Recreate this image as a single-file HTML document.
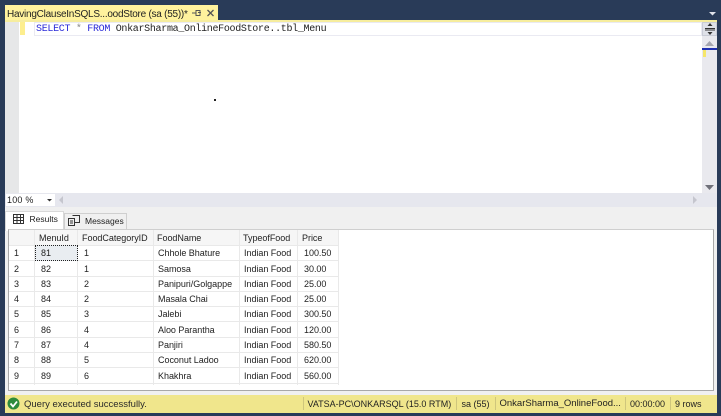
<!DOCTYPE html>
<html><head><meta charset="utf-8"><style>
html,body{margin:0;padding:0}
body{width:721px;height:416px;overflow:hidden;position:relative;background:#293b58;font-family:"Liberation Sans",sans-serif;font-size:9px;color:#222}
div{position:absolute;box-sizing:border-box;white-space:nowrap}
.l{background:#e9e9e9}
.c{line-height:17px;height:15px;font-size:9px;letter-spacing:-.03px}
.s{top:396px;line-height:16px;font-size:9px}
</style></head><body>
<div style="left:5px;top:5px;width:213px;height:16px;background:#fff29d"></div>
<div style="left:7px;top:7px;font-size:10px;letter-spacing:-.25px;line-height:15px;color:#222">HavingClauseInSQLS...oodStore (sa (55))*</div>
<svg style="position:absolute;left:190px;top:8px" width="30" height="11"><path d="M2 5h4M6 2.500v5h4v-5zM8 4.500h3" stroke="#555" fill="none"/><path d="M17.500 2l6 6M23.500 2l-6 6" stroke="#555" stroke-width="1.300"/></svg>
<svg style="position:absolute;left:708px;top:11px" width="10" height="6"><path d="M1 1h7l-3.500 3.500z" fill="#e0e3ea"/></svg>
<div style="left:5px;top:20px;width:712px;height:2px;background:#f6ed9e"></div>
<div style="left:5px;top:22px;width:712px;height:171px;background:#fff"></div>
<div style="left:5px;top:22px;width:14px;height:171px;background:#e6e7e8"></div>
<div style="left:20px;top:22px;width:5px;height:13px;background:#fdee8e"></div>
<div style="left:34px;top:22px;width:668px;height:14px;border:1px solid #eaeaf2"></div>
<div style="left:36px;top:23px;height:14px;font:10px/14px 'Liberation Mono',monospace;letter-spacing:-.31px;color:#222"><span style="color:#2a2ad8">SELECT</span> <span style="color:#888">*</span> <span style="color:#2a2ad8">FROM</span> OnkarSharma_OnlineFoodStore..tbl_Menu</div>
<div style="left:702px;top:22px;width:15px;height:185px;background:#e9e9ee"></div>
<div style="left:702px;top:22px;width:15px;height:14px;background:#dfe1e8;border:1px solid #c9ccd6"></div>
<svg style="position:absolute;left:703px;top:23px" width="14" height="12"><path d="M2 5.500h10M2 7h10" stroke="#333"/><path d="M7 0l-2.500 3h5zM7 12l-2.500-3h5z" fill="#333"/></svg>
<svg style="position:absolute;left:703px;top:40px" width="13" height="7"><path d="M2 6h9L6.500 1z" fill="#a5a6b0"/></svg>
<div style="left:702px;top:48px;width:15px;height:2px;background:#1f2fb0"></div>
<div style="left:703px;top:50px;width:3px;height:7px;background:#f5e66a"></div>
<svg style="position:absolute;left:703px;top:184px" width="13" height="7"><path d="M2 1h9L6.500 6z" fill="#6f7079"/></svg>
<div style="left:5px;top:193px;width:712px;height:14px;background:#e6e7ee"></div>
<div style="left:6px;top:194px;width:49px;height:12px;background:#fff"></div>
<div style="left:7px;top:194px;line-height:12px;font-size:9px;letter-spacing:.2px">100 %</div>
<svg style="position:absolute;left:46px;top:198px" width="8" height="5"><path d="M1 1h5L3.500 3.500z" fill="#333"/></svg>
<svg style="position:absolute;left:58px;top:195px" width="6" height="10"><path d="M5 1v8L1 5z" fill="#c5c6ce"/></svg>
<svg style="position:absolute;left:692px;top:195px" width="6" height="10"><path d="M1 1v8l4-4z" fill="#c5c6ce"/></svg>
<div style="left:5px;top:207px;width:712px;height:188px;background:#f0f0f0"></div>
<div style="left:5px;top:211px;width:59px;height:20px;background:#fff;border:1px solid #d8d8d8;border-bottom:0"></div>
<div style="left:64px;top:213px;width:63px;height:17px;background:#f0f0f0;border:1px solid #cfcfcf;border-bottom:0"></div>
<svg style="position:absolute;left:13px;top:214px" width="11" height="10"><path d="M.5.500h10v9H.5zM.5 3.500h10M.5 6.500h10M4 .5v9M7.500.5v9" fill="#fff" stroke="#333"/></svg>
<div style="left:29.500px;top:211px;line-height:16px;font-size:8.500px">Results</div>
<svg style="position:absolute;left:68px;top:214px" width="12" height="12"><path d="M.5 4.500h6v7h-6zM4.500 1.500h7v7h-5M2 7h3M2 9h3" fill="none" stroke="#333"/></svg>
<div style="left:85px;top:213px;line-height:16px;font-size:8.500px">Messages</div>
<div style="left:8px;top:229px;width:706px;height:162px;background:#fff;border:1px solid #a8a8a8;border-top:1px solid #cfcfcf"></div>
<div style="left:9px;top:230px;width:329px;height:15px;background:#f6f6f6"></div>
<div class="l" style="left:34px;top:230px;width:1px;height:155px"></div>
<div class="l" style="left:77px;top:230px;width:1px;height:155px"></div>
<div class="l" style="left:153px;top:230px;width:1px;height:155px"></div>
<div class="l" style="left:239px;top:230px;width:1px;height:155px"></div>
<div class="l" style="left:297px;top:230px;width:1px;height:155px"></div>
<div class="l" style="left:338px;top:230px;width:1px;height:155px"></div>
<div class="l" style="left:9px;top:245px;width:330px;height:1px"></div>
<div class="l" style="left:9px;top:260px;width:330px;height:1px"></div>
<div class="l" style="left:9px;top:276px;width:330px;height:1px"></div>
<div class="l" style="left:9px;top:291px;width:330px;height:1px"></div>
<div class="l" style="left:9px;top:306px;width:330px;height:1px"></div>
<div class="l" style="left:9px;top:321px;width:330px;height:1px"></div>
<div class="l" style="left:9px;top:337px;width:330px;height:1px"></div>
<div class="l" style="left:9px;top:352px;width:330px;height:1px"></div>
<div class="l" style="left:9px;top:367px;width:330px;height:1px"></div>
<div class="l" style="left:9px;top:383px;width:330px;height:1px"></div>
<div style="left:35px;top:245px;width:43px;height:16px;background:#e9edf1;border:1px dotted #222"></div>
<div class="c" style="left:39px;top:230px">MenuId</div><div class="c" style="left:82px;top:230px">FoodCategoryID</div><div class="c" style="left:157px;top:230px">FoodName</div><div class="c" style="left:243px;top:230px">TypeofFood</div><div class="c" style="left:302px;top:230px">Price</div>
<div class="c" style="left:14px;top:245px">1</div><div class="c" style="left:41px;top:245px">81</div><div class="c" style="left:84px;top:245px">1</div><div class="c" style="left:158px;top:245px">Chhole Bhature</div><div class="c" style="left:244px;top:245px">Indian Food</div><div class="c" style="left:304px;top:245px">100.50</div>
<div class="c" style="left:14px;top:261px">2</div><div class="c" style="left:41px;top:261px">82</div><div class="c" style="left:84px;top:261px">1</div><div class="c" style="left:158px;top:261px">Samosa</div><div class="c" style="left:244px;top:261px">Indian Food</div><div class="c" style="left:304px;top:261px">30.00</div>
<div class="c" style="left:14px;top:276px">3</div><div class="c" style="left:41px;top:276px">83</div><div class="c" style="left:84px;top:276px">2</div><div class="c" style="left:158px;top:276px">Panipuri/Golgappe</div><div class="c" style="left:244px;top:276px">Indian Food</div><div class="c" style="left:304px;top:276px">25.00</div>
<div class="c" style="left:14px;top:291px">4</div><div class="c" style="left:41px;top:291px">84</div><div class="c" style="left:84px;top:291px">2</div><div class="c" style="left:158px;top:291px">Masala Chai</div><div class="c" style="left:244px;top:291px">Indian Food</div><div class="c" style="left:304px;top:291px">25.00</div>
<div class="c" style="left:14px;top:306px">5</div><div class="c" style="left:41px;top:306px">85</div><div class="c" style="left:84px;top:306px">3</div><div class="c" style="left:158px;top:306px">Jalebi</div><div class="c" style="left:244px;top:306px">Indian Food</div><div class="c" style="left:304px;top:306px">300.50</div>
<div class="c" style="left:14px;top:322px">6</div><div class="c" style="left:41px;top:322px">86</div><div class="c" style="left:84px;top:322px">4</div><div class="c" style="left:158px;top:322px">Aloo Parantha</div><div class="c" style="left:244px;top:322px">Indian Food</div><div class="c" style="left:304px;top:322px">120.00</div>
<div class="c" style="left:14px;top:337px">7</div><div class="c" style="left:41px;top:337px">87</div><div class="c" style="left:84px;top:337px">4</div><div class="c" style="left:158px;top:337px">Panjiri</div><div class="c" style="left:244px;top:337px">Indian Food</div><div class="c" style="left:304px;top:337px">580.50</div>
<div class="c" style="left:14px;top:352px">8</div><div class="c" style="left:41px;top:352px">88</div><div class="c" style="left:84px;top:352px">5</div><div class="c" style="left:158px;top:352px">Coconut Ladoo</div><div class="c" style="left:244px;top:352px">Indian Food</div><div class="c" style="left:304px;top:352px">620.00</div>
<div class="c" style="left:14px;top:368px">9</div><div class="c" style="left:41px;top:368px">89</div><div class="c" style="left:84px;top:368px">6</div><div class="c" style="left:158px;top:368px">Khakhra</div><div class="c" style="left:244px;top:368px">Indian Food</div><div class="c" style="left:304px;top:368px">560.00</div>
<div style="left:214px;top:99px;width:2px;height:2px;background:#222"></div>
<div style="left:5px;top:395px;width:712px;height:18px;background:#f0e68c"></div>
<svg style="position:absolute;left:7px;top:397px" width="14" height="14"><circle cx="6.500" cy="6.500" r="6" fill="#2e8b3c"/><path d="M3.500 6.500l2.500 3 4-5" stroke="#fff" stroke-width="1.800" fill="none"/></svg>
<div style="left:24px;top:397px;line-height:16px;font-size:9.500px;color:#2a2a2a">Query executed successfully.</div>
<div style="left:303px;top:397px;width:1px;height:13px;background:#cfc67c"></div>
<div class="s" style="left:307.500px">VATSA-PC\ONKARSQL (15.0 RTM)</div>
<div style="left:456px;top:397px;width:1px;height:13px;background:#cfc67c"></div>
<div class="s" style="left:461.500px">sa (55)</div>
<div style="left:495px;top:397px;width:1px;height:13px;background:#cfc67c"></div>
<div class="s" style="left:499.500px;font-size:9.500px">OnkarSharma_OnlineFood...</div>
<div style="left:625px;top:397px;width:1px;height:13px;background:#cfc67c"></div>
<div class="s" style="left:630px">00:00:00</div>
<div style="left:670px;top:397px;width:1px;height:13px;background:#cfc67c"></div>
<div class="s" style="left:675px">9 rows</div>
</body></html>
